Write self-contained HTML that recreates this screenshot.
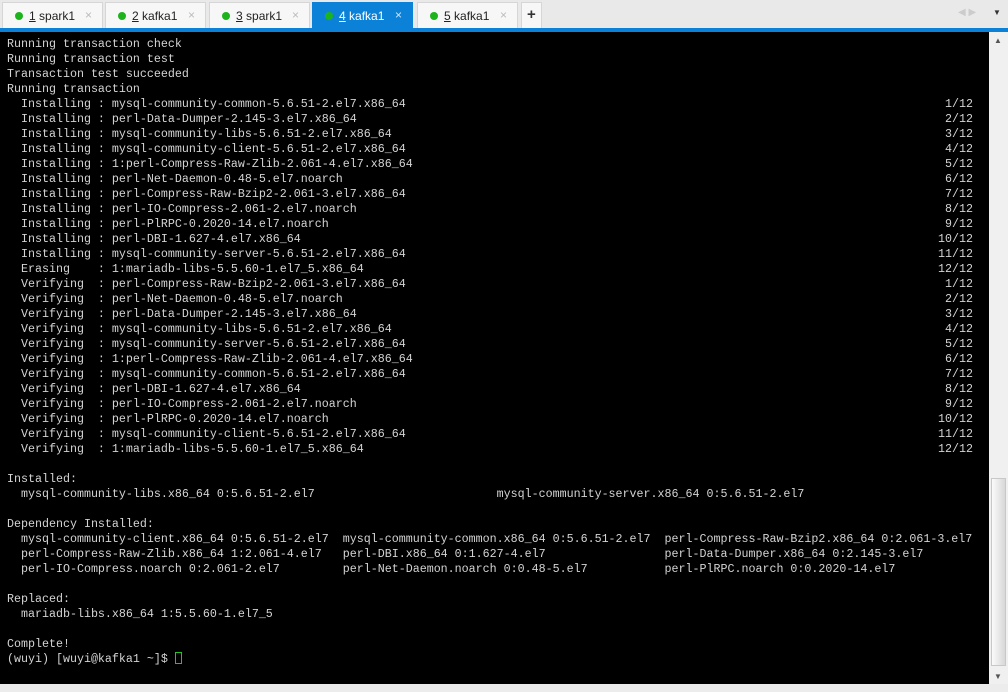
<!DOCTYPE html>
<html><head><style>
body{margin:0;width:1008px;height:692px;overflow:hidden;background:#ececec;font-family:"Liberation Sans",sans-serif;position:relative}
.tb{position:absolute;left:0;top:0;width:1008px;height:28px;background:#e9e9e9}
.tab{position:absolute;top:2px;height:26px;width:101px;background:#f7f7f7;border:1px solid #d6d6d6;border-bottom:none;box-sizing:border-box;font-size:12px;color:#222}
.tab .d{position:absolute;left:12px;top:9px;width:8px;height:8px;border-radius:50%;background:#1db31d}
.tab .t{position:absolute;left:26px;top:6px}
.tab .x{position:absolute;right:10px;top:5px;color:#bbb;font-size:12px}
.tab.a{background:#0b82d8;border-color:#0b82d8;color:#fff}
.tab.a .x{color:#cfe6f7}
u{text-decoration:underline}
.blue{position:absolute;left:0;top:28px;width:1008px;height:4px;background:#0b82d8}
.term{position:absolute;left:0;top:32px;width:989px;height:652px;background:#000}
.sb{position:absolute;left:989px;top:32px;width:19px;height:652px;background:#f0f0f0}
.thumb{position:absolute;left:2px;top:446px;width:15px;height:188px;background:linear-gradient(90deg,#fafafa,#d8d8d8);border:1px solid #c8c8c8;box-sizing:border-box}
.txt{position:absolute;left:7px;top:37px;font-family:"Liberation Mono",monospace;font-size:11.67px;color:#d4d4d4;line-height:15px;white-space:pre}
.l{position:relative;height:15px;width:966px}
.r{position:absolute;right:0;top:0}
</style></head><body>
<div class="tb">
<div class="tab" style="left:2px"><span class="d"></span><span class="t"><u>1</u> spark1</span><span class="x">×</span></div>
<div class="tab" style="left:105px"><span class="d"></span><span class="t"><u>2</u> kafka1</span><span class="x">×</span></div>
<div class="tab" style="left:209px"><span class="d"></span><span class="t"><u>3</u> spark1</span><span class="x">×</span></div>
<div class="tab a" style="left:312px"><span class="d"></span><span class="t"><u>4</u> kafka1</span><span class="x">×</span></div>
<div class="tab" style="left:417px"><span class="d"></span><span class="t"><u>5</u> kafka1</span><span class="x">×</span></div>
<div class="tab" style="left:521px;width:21px"><span style="position:absolute;left:5px;top:3px;font-size:15px;font-weight:bold;color:#333">+</span></div>
<span style="position:absolute;left:958px;top:7px;color:#ccc;font-size:10px">◀ ▶</span>
<span style="position:absolute;left:993px;top:8px;color:#333;font-size:8px">▼</span>
</div>
<div class="blue"></div>
<div class="term"></div>
<div class="sb"><span style="position:absolute;left:5px;top:4px;font-size:8px;color:#555">▲</span><div class="thumb"></div><span style="position:absolute;left:5px;top:640px;font-size:8px;color:#555">▼</span></div>
<div class="txt"><div class="l">Running transaction check</div><div class="l">Running transaction test</div><div class="l">Transaction test succeeded</div><div class="l">Running transaction</div><div class="l">  Installing : mysql-community-common-5.6.51-2.el7.x86_64<span class="r">1/12</span></div><div class="l">  Installing : perl-Data-Dumper-2.145-3.el7.x86_64<span class="r">2/12</span></div><div class="l">  Installing : mysql-community-libs-5.6.51-2.el7.x86_64<span class="r">3/12</span></div><div class="l">  Installing : mysql-community-client-5.6.51-2.el7.x86_64<span class="r">4/12</span></div><div class="l">  Installing : 1:perl-Compress-Raw-Zlib-2.061-4.el7.x86_64<span class="r">5/12</span></div><div class="l">  Installing : perl-Net-Daemon-0.48-5.el7.noarch<span class="r">6/12</span></div><div class="l">  Installing : perl-Compress-Raw-Bzip2-2.061-3.el7.x86_64<span class="r">7/12</span></div><div class="l">  Installing : perl-IO-Compress-2.061-2.el7.noarch<span class="r">8/12</span></div><div class="l">  Installing : perl-PlRPC-0.2020-14.el7.noarch<span class="r">9/12</span></div><div class="l">  Installing : perl-DBI-1.627-4.el7.x86_64<span class="r">10/12</span></div><div class="l">  Installing : mysql-community-server-5.6.51-2.el7.x86_64<span class="r">11/12</span></div><div class="l">  Erasing    : 1:mariadb-libs-5.5.60-1.el7_5.x86_64<span class="r">12/12</span></div><div class="l">  Verifying  : perl-Compress-Raw-Bzip2-2.061-3.el7.x86_64<span class="r">1/12</span></div><div class="l">  Verifying  : perl-Net-Daemon-0.48-5.el7.noarch<span class="r">2/12</span></div><div class="l">  Verifying  : perl-Data-Dumper-2.145-3.el7.x86_64<span class="r">3/12</span></div><div class="l">  Verifying  : mysql-community-libs-5.6.51-2.el7.x86_64<span class="r">4/12</span></div><div class="l">  Verifying  : mysql-community-server-5.6.51-2.el7.x86_64<span class="r">5/12</span></div><div class="l">  Verifying  : 1:perl-Compress-Raw-Zlib-2.061-4.el7.x86_64<span class="r">6/12</span></div><div class="l">  Verifying  : mysql-community-common-5.6.51-2.el7.x86_64<span class="r">7/12</span></div><div class="l">  Verifying  : perl-DBI-1.627-4.el7.x86_64<span class="r">8/12</span></div><div class="l">  Verifying  : perl-IO-Compress-2.061-2.el7.noarch<span class="r">9/12</span></div><div class="l">  Verifying  : perl-PlRPC-0.2020-14.el7.noarch<span class="r">10/12</span></div><div class="l">  Verifying  : mysql-community-client-5.6.51-2.el7.x86_64<span class="r">11/12</span></div><div class="l">  Verifying  : 1:mariadb-libs-5.5.60-1.el7_5.x86_64<span class="r">12/12</span></div><div class="l"></div><div class="l">Installed:</div><div class="l">  mysql-community-libs.x86_64 0:5.6.51-2.el7                          mysql-community-server.x86_64 0:5.6.51-2.el7</div><div class="l"></div><div class="l">Dependency Installed:</div><div class="l">  mysql-community-client.x86_64 0:5.6.51-2.el7  mysql-community-common.x86_64 0:5.6.51-2.el7  perl-Compress-Raw-Bzip2.x86_64 0:2.061-3.el7</div><div class="l">  perl-Compress-Raw-Zlib.x86_64 1:2.061-4.el7   perl-DBI.x86_64 0:1.627-4.el7                 perl-Data-Dumper.x86_64 0:2.145-3.el7</div><div class="l">  perl-IO-Compress.noarch 0:2.061-2.el7         perl-Net-Daemon.noarch 0:0.48-5.el7           perl-PlRPC.noarch 0:0.2020-14.el7</div><div class="l"></div><div class="l">Replaced:</div><div class="l">  mariadb-libs.x86_64 1:5.5.60-1.el7_5</div><div class="l"></div><div class="l">Complete!</div><div class="l">(wuyi) [wuyi@kafka1 ~]$ <span style="display:inline-block;width:7px;height:12px;border:1px solid #1ec81e;box-sizing:border-box;vertical-align:-2px"></span></div></div>
</body></html>
